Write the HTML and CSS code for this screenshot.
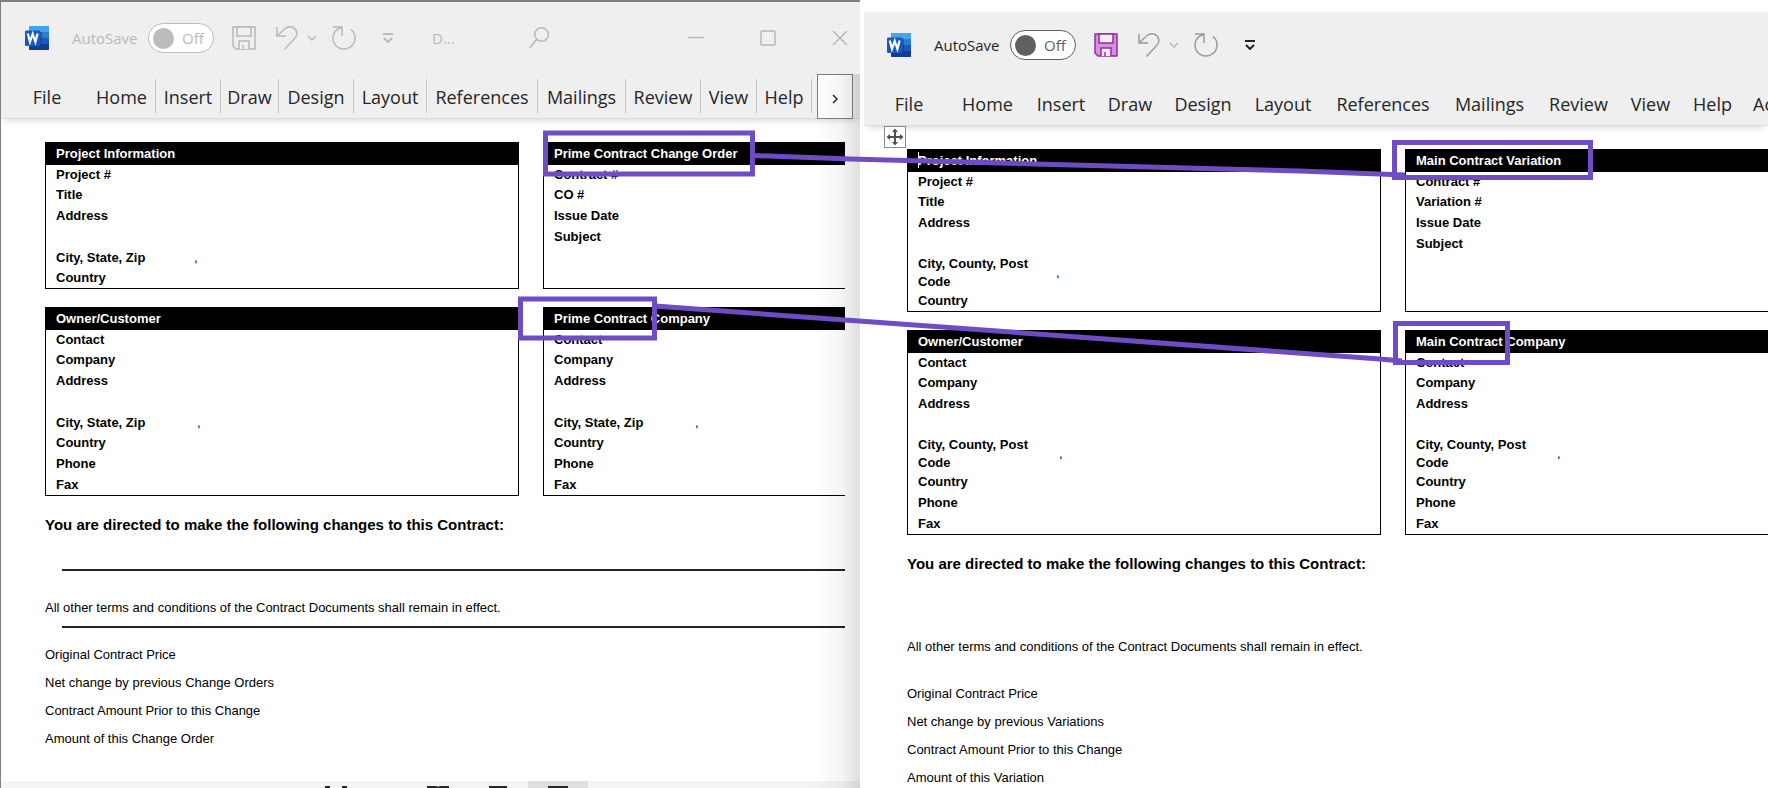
FILE: index.html
```html
<!DOCTYPE html>
<html lang="en">
<head>
    <meta charset="UTF-8">
    <meta name="viewport" content="width=device-width, initial-scale=1.0">
    <title>Contract Change Order / Variation</title>
    <link rel="stylesheet" href="styles.css">
</head>
<body>
    <!-- Shared icons -->
    <svg class="sprite" aria-hidden="true">
        <symbol id="word" viewBox="0 0 24 24">
            <rect x="4" y="0" width="20" height="24" rx="1" fill="#2b7cd3"/>
            <path d="M5 0h18a1 1 0 0 1 1 1v5H4V1a1 1 0 0 1 1-1z" fill="#41a5ee"/>
            <rect x="4" y="12" width="20" height="6" fill="#185abd"/>
            <path d="M4 18h20v5a1 1 0 0 1-1 1H5a1 1 0 0 1-1-1z" fill="#103f91"/>
            <path d="M4 6h12a1 1 0 0 1 1 1v12a1 1 0 0 1-1 1H4z" fill="#0b2f6e" opacity=".45"/>
            <rect x="0" y="4.500" width="15.500" height="15.500" rx="1.200" fill="#185abd"/>
            <path d="M2.800 7.500l2.200 8.500 2.700-8 2.700 8 2.200-8.500" fill="none" stroke="#fff" stroke-width="2.200"/>
        </symbol>
        <symbol id="save" viewBox="0 0 24 24">
            <path class="disk" d="M1 1h22v22H4l-3-3z"/>
            <path class="slot" fill="#efefef" d="M5 1h14v9H5zM7 23v-8h10v8"/>
            <path class="slot" d="M11 19v4"/>
        </symbol>
        <symbol id="undo" viewBox="0 0 22 24">
            <path d="M1 1v9h9M1.500 9.500l7-6.500C12 0 17 0 19.500 3.500c2 3 1.500 6-.5 8.500L8.500 23.500"/>
        </symbol>
        <symbol id="chevron" viewBox="0 0 10 6">
            <path d="M1 1l4 4 4-4"/>
        </symbol>
        <symbol id="redo" viewBox="0 0 24 24">
            <path d="M1 1h9v9M9.500 1.500C4.500 3 1 7 1 12.200a11 11 0 1 0 18-8.700"/>
        </symbol>
        <symbol id="customize" viewBox="0 0 12 10">
            <path d="M1 1h10M2 5l4 4 4-4"/>
        </symbol>
    </svg>

    <div class="desktop">
        <!-- US template -->
        <section class="window inactive">
            <header class="title-bar">
                <svg class="logo"><use href="#word"/></svg>
                <label class="autosave">
                    <span class="autosave-name">AutoSave</span>
                    <span class="pill"><input type="checkbox">Off</span>
                </label>
                <button class="tool save" aria-label="Save"><svg><use href="#save"/></svg></button>
                <button class="tool undo" aria-label="Undo"><svg><use href="#undo"/></svg></button>
                <button class="tool chevron" aria-label="Undo list"><svg><use href="#chevron"/></svg></button>
                <button class="tool redo" aria-label="Redo"><svg><use href="#redo"/></svg></button>
                <button class="tool customize" aria-label="Customize toolbar"><svg><use href="#customize"/></svg></button>
                <span class="doc-name">D...</span>
                <button class="tool search" aria-label="Search"><svg viewBox="0 0 20 22"><circle cx="12.500" cy="7.500" r="6.800"/><path d="M7.500 12.500L.7 21"/></svg></button>
                <div class="window-buttons">
                    <button class="tool" aria-label="Minimize"><svg viewBox="0 0 16 16"><path d="M0 7.500h16"/></svg></button>
                    <button class="tool" aria-label="Maximize"><svg viewBox="0 0 16 16"><rect x="1" y="1" width="14" height="14" rx="1"/></svg></button>
                    <button class="tool" aria-label="Close"><svg viewBox="0 0 16 16"><path d="M1 1l14 14M15 1L1 15"/></svg></button>
                </div>
            </header>
            <nav class="tabs">
                <button>File</button>
                <button>Home</button>
                <button>Insert</button>
                <button>Draw</button>
                <button>Design</button>
                <button>Layout</button>
                <button>References</button>
                <button>Mailings</button>
                <button>Review</button>
                <button>View</button>
                <button>Help</button>
                <button class="more" aria-label="More tabs"><svg viewBox="0 0 6 10"><path d="M1 1l4 4-4 4"/></svg></button>
            </nav>

            <main class="page">
                <div class="cards">
                    <table class="card">
                        <colgroup><col class="label-col"><col></colgroup>
                        <thead><tr><th colspan="2">Project Information</th></tr></thead>
                        <tbody>
                            <tr><th>Project #</th><td></td></tr>
                            <tr><th>Title</th><td></td></tr>
                            <tr><th>Address</th><td></td></tr>
                            <tr><th></th><td></td></tr>
                            <tr><th>City, State, Zip</th><td>,</td></tr>
                            <tr><th>Country</th><td></td></tr>
                        </tbody>
                    </table>
                    <table class="card cut">
                        <colgroup><col class="label-col"><col></colgroup>
                        <thead><tr><th colspan="2">Prime Contract Change Order</th></tr></thead>
                        <tbody>
                            <tr><th>Contract #</th><td></td></tr>
                            <tr><th>CO #</th><td></td></tr>
                            <tr><th>Issue Date</th><td></td></tr>
                            <tr><th>Subject</th><td></td></tr>
                            <tr><th></th><td></td></tr>
                            <tr><th></th><td></td></tr>
                        </tbody>
                    </table>
                    <table class="card company">
                        <colgroup><col class="label-col"><col></colgroup>
                        <thead><tr><th colspan="2">Owner/Customer</th></tr></thead>
                        <tbody>
                            <tr><th>Contact</th><td></td></tr>
                            <tr><th>Company</th><td></td></tr>
                            <tr><th>Address</th><td></td></tr>
                            <tr><th></th><td></td></tr>
                            <tr><th>City, State, Zip</th><td>,</td></tr>
                            <tr><th>Country</th><td></td></tr>
                            <tr><th>Phone</th><td></td></tr>
                            <tr><th>Fax</th><td></td></tr>
                        </tbody>
                    </table>
                    <table class="card company cut">
                        <colgroup><col class="label-col"><col></colgroup>
                        <thead><tr><th colspan="2">Prime Contract Company</th></tr></thead>
                        <tbody>
                            <tr><th>Contact</th><td></td></tr>
                            <tr><th>Company</th><td></td></tr>
                            <tr><th>Address</th><td></td></tr>
                            <tr><th></th><td></td></tr>
                            <tr><th>City, State, Zip</th><td>,</td></tr>
                            <tr><th>Country</th><td></td></tr>
                            <tr><th>Phone</th><td></td></tr>
                            <tr><th>Fax</th><td></td></tr>
                        </tbody>
                    </table>
                </div>
                <h2>You are directed to make the following changes to this Contract:</h2>
                <hr>
                <p class="terms">All other terms and conditions of the Contract Documents shall remain in effect.</p>
                <hr>
                <ul class="amounts">
                    <li>Original Contract Price</li>
                    <li>Net change by previous Change Orders</li>
                    <li>Contract Amount Prior to this Change</li>
                    <li>Amount of this Change Order</li>
                </ul>
            </main>

            <footer class="status-bar">
                <button aria-label="Focus"><svg viewBox="0 0 22 20"><path d="M0 1h5M17 1h5M1 1v5M21 1v5"/></svg></button>
                <button aria-label="Read mode"><svg viewBox="0 0 22 20"><path d="M1 1h8l2 1 2-1h8v16H1zM11 2v15"/></svg></button>
                <button aria-label="Print layout"><svg viewBox="0 0 22 20"><path d="M3 1h16v18H3z"/></svg></button>
                <button class="active" aria-label="Web layout"><svg viewBox="0 0 22 20"><path d="M2 1h18v18H2z"/></svg></button>
            </footer>
        </section>

        <!-- UK template -->
        <section class="window variation">
            <header class="title-bar">
                <svg class="logo"><use href="#word"/></svg>
                <label class="autosave">
                    <span class="autosave-name">AutoSave</span>
                    <span class="pill"><input type="checkbox">Off</span>
                </label>
                <button class="tool save" aria-label="Save"><svg><use href="#save"/></svg></button>
                <button class="tool undo" aria-label="Undo"><svg><use href="#undo"/></svg></button>
                <button class="tool chevron" aria-label="Undo list"><svg><use href="#chevron"/></svg></button>
                <button class="tool redo" aria-label="Redo"><svg><use href="#redo"/></svg></button>
                <button class="tool customize" aria-label="Customize toolbar"><svg><use href="#customize"/></svg></button>
            </header>
            <nav class="tabs">
                <button>File</button>
                <button>Home</button>
                <button>Insert</button>
                <button>Draw</button>
                <button>Design</button>
                <button>Layout</button>
                <button>References</button>
                <button>Mailings</button>
                <button>Review</button>
                <button>View</button>
                <button>Help</button>
                <button class="last">Acrobat</button>
            </nav>

            <main class="page">
                <svg class="move-handle" viewBox="0 0 22 22">
                    <rect x=".5" y=".5" width="21" height="21"/>
                    <path d="M11 4v14M4 11h14"/>
                    <path class="tip" d="M11 2.500l3 3.500H8zM11 19.500l3-3.500H8zM2.500 11L6 8v6zM19.500 11L16 8v6z"/>
                </svg>
                <div class="cards">
                    <table class="card">
                        <colgroup><col class="label-col"><col></colgroup>
                        <thead><tr><th colspan="2"><span class="caret"></span>Project Information</th></tr></thead>
                        <tbody>
                            <tr><th>Project #</th><td></td></tr>
                            <tr><th>Title</th><td></td></tr>
                            <tr><th>Address</th><td></td></tr>
                            <tr><th></th><td></td></tr>
                            <tr class="tall"><th>City, County, Post Code</th><td>,</td></tr>
                            <tr><th>Country</th><td></td></tr>
                        </tbody>
                    </table>
                    <table class="card cut">
                        <colgroup><col class="label-col"><col></colgroup>
                        <thead><tr><th colspan="2">Main Contract Variation</th></tr></thead>
                        <tbody>
                            <tr><th>Contract #</th><td></td></tr>
                            <tr><th>Variation #</th><td></td></tr>
                            <tr><th>Issue Date</th><td></td></tr>
                            <tr><th>Subject</th><td></td></tr>
                            <tr class="tall"><th></th><td></td></tr>
                            <tr><th></th><td></td></tr>
                        </tbody>
                    </table>
                    <table class="card company">
                        <colgroup><col class="label-col"><col></colgroup>
                        <thead><tr><th colspan="2">Owner/Customer</th></tr></thead>
                        <tbody>
                            <tr><th>Contact</th><td></td></tr>
                            <tr><th>Company</th><td></td></tr>
                            <tr><th>Address</th><td></td></tr>
                            <tr><th></th><td></td></tr>
                            <tr class="tall"><th>City, County, Post Code</th><td>,</td></tr>
                            <tr><th>Country</th><td></td></tr>
                            <tr><th>Phone</th><td></td></tr>
                            <tr><th>Fax</th><td></td></tr>
                        </tbody>
                    </table>
                    <table class="card company cut">
                        <colgroup><col class="label-col"><col></colgroup>
                        <thead><tr><th colspan="2">Main Contract Company</th></tr></thead>
                        <tbody>
                            <tr><th>Contact</th><td></td></tr>
                            <tr><th>Company</th><td></td></tr>
                            <tr><th>Address</th><td></td></tr>
                            <tr><th></th><td></td></tr>
                            <tr class="tall"><th>City, County, Post Code</th><td>,</td></tr>
                            <tr><th>Country</th><td></td></tr>
                            <tr><th>Phone</th><td></td></tr>
                            <tr><th>Fax</th><td></td></tr>
                        </tbody>
                    </table>
                </div>
                <h2>You are directed to make the following changes to this Contract:</h2>
                <hr>
                <p class="terms">All other terms and conditions of the Contract Documents shall remain in effect.</p>
                <hr>
                <ul class="amounts">
                    <li>Original Contract Price</li>
                    <li>Net change by previous Variations</li>
                    <li>Contract Amount Prior to this Change</li>
                    <li>Amount of this Variation</li>
                </ul>
            </main>
        </section>

        <!-- Purple markup linking the renamed headings -->
        <svg class="markup" width="1768" height="788">
            <rect x="545.500" y="133" width="207" height="41"/>
            <rect x="520.500" y="299" width="134" height="39"/>
            <rect x="1394.500" y="142.500" width="196" height="35"/>
            <rect x="1395.500" y="323.500" width="112" height="39"/>
            <path d="M753 155.500L850 159l450 12 105 4"/>
            <path d="M655 306l190 14 535 39 22 2"/>
        </svg>
    </div>
</body>
</html>
```

FILE: styles.css
```css
* {
    box-sizing: border-box;
}

body {
    margin: 0;
    background: #fff;
    font-family: "Liberation Sans", Arial, sans-serif;
    color: #000;
}

button {
    padding: 0;
    border: none;
    background: none;
    font: inherit;
    color: inherit;
}

.sprite {
    display: none;
}

.desktop {
    position: relative;
    display: flex;
    gap: 4px;
    height: 100vh;
    overflow: hidden;
}

/* Windows */
.window {
    position: relative;
    flex: 859 1 0;
    min-width: 0;
    overflow: hidden;
    border-top: 2px solid #808080;
    border-left: 1px solid #808080;
}

.variation {
    flex-grow: 904;
    margin-top: 12px;
    border: none;
}

/* Fade along the right edge of the back window */
.inactive::after {
    content: "";
    position: absolute;
    top: 72px;
    right: 0;
    bottom: 0;
    width: 48px;
    background: linear-gradient(to right, rgba(0, 0, 0, 0), rgba(0, 0, 0, 0.04) 60%, rgba(0, 0, 0, 0.13));
    pointer-events: none;
}

/* Title bar */
.title-bar {
    display: flex;
    align-items: center;
    height: 72px;
    padding: 0 12px 0 24px;
    background: #efefef;
    font-family: "Open Sans", "Noto Sans", sans-serif;
    font-size: 15px;
    color: #262626;
}

.variation .title-bar {
    height: 69px;
    padding: 0 0 3px 23px;
}

.inactive .title-bar {
    color: #b9b9b9;
}

.logo {
    width: 24px;
    height: 24px;
    margin-right: 23px;
}

.autosave {
    display: flex;
    align-items: center;
}

.autosave-name {
    width: 76px;
}

.pill {
    display: flex;
    align-items: center;
    gap: 8px;
    width: 66px;
    height: 30px;
    padding-left: 4px;
    border: 1px solid #606060;
    border-radius: 15px;
    background: #fff;
    color: #606060;
}

.pill input {
    appearance: none;
    width: 21px;
    height: 21px;
    margin: 0;
    border-radius: 50%;
    background: #606060;
}

.inactive .pill {
    border-color: #bcbcbc;
    color: #b9b9b9;
}

.inactive .pill input {
    background: #bcbcbc;
}

.tool svg {
    display: block;
    width: 16px;
    height: 16px;
    fill: none;
    stroke: #b9b9b9;
    stroke-width: 1.5;
}

.save {
    margin-left: 18px;
}

.save svg,
.redo svg {
    width: 24px;
    height: 24px;
}

.variation .save svg {
    fill: #d592dc;
    stroke: #962ba0;
}

.variation .undo svg,
.variation .redo svg {
    stroke: #9b9b9b;
}

.undo {
    margin-left: 20px;
}

.undo svg {
    width: 22px;
    height: 24px;
}

.chevron {
    margin-left: 9px;
}

.chevron svg {
    width: 10px;
    height: 6px;
}

.redo {
    margin-left: 15px;
}

.customize {
    margin-left: 26px;
}

.customize svg {
    width: 12px;
    height: 10px;
    stroke-width: 2;
}

.variation .customize svg {
    stroke: #262626;
}

.doc-name {
    width: 97px;
    margin-left: 38px;
}

.search svg {
    width: 20px;
    height: 22px;
}

.window-buttons {
    display: flex;
    gap: 56px;
    margin-left: auto;
}

/* Ribbon tabs */
.tabs {
    position: relative;
    display: grid;
    grid-template-columns: 82px 68px 65px 58px 75px 73px 111px 88px 75px 56px 55px 36px;
    height: 45px;
    padding-left: 5px;
    background: #efefef;
    border-bottom: 1px solid #dcdcdc;
    box-shadow: 0 6px 6px -4px rgba(0, 0, 0, 0.14);
    font-family: "Open Sans", "Noto Sans", sans-serif;
    font-size: 18px;
    line-height: 24px;
    color: #262626;
    white-space: nowrap;
}

.tabs button {
    height: 34px;
    margin-top: 5px;
    padding-top: 2px;
}

.inactive .tabs button {
    border-right: 1px solid #c8c8c8;
}

.inactive .tabs button:first-child {
    border: none;
}

.inactive .tabs .more {
    width: 36px;
    height: 45px;
    margin: 0 0 0 5px;
    padding: 0;
    border: 1px solid #808080;
    background: #fff;
}

.more svg {
    width: 6px;
    height: 10px;
    fill: none;
    stroke: #262626;
    stroke-width: 1.5;
}

.variation .tabs {
    grid-template-columns: 82px 75px 72px 66px 80px 80px 120px 93px 85px 59px 65px 80px;
    padding-left: 4px;
}

.tabs .last {
    padding-left: 8px;
    text-align: left;
}

/* Document page */
.page {
    position: relative;
    margin: 23px 15px 0 44px;
}

.variation .page {
    margin: 23px 0 0 43px;
}

.cards {
    display: grid;
    grid-template-columns: 474fr 302fr;
    gap: 18px 24px;
}

.variation .cards {
    grid-template-columns: 474fr 363fr;
}

.card {
    width: 100%;
    border: 1px solid #000;
    border-top: none;
    border-spacing: 0;
    table-layout: fixed;
    font-size: 13px;
    line-height: 18px;
}

.card.cut {
    border-right: none;
}

.label-col {
    width: 140px;
}

.card th,
.card td {
    height: 21px;
    padding: 0;
    text-align: left;
    vertical-align: middle;
}

.card th {
    padding-left: 10px;
}

.card thead th {
    height: 23px;
    background: #000;
    color: #fff;
}

.card tbody tr:nth-child(1) th,
.card tbody tr:nth-child(2) th,
.card tbody tr:nth-child(6) th {
    height: 20px;
}

.card tbody tr:nth-child(1) td,
.card tbody tr:nth-child(2) td,
.card tbody tr:nth-child(6) td {
    height: 20px;
}

.card .tall th,
.card .tall td {
    height: 37px;
}

.card td {
    padding-left: 8px;
}

.card.company td {
    padding-left: 11px;
}

h2 {
    margin: 19px 0 0;
    font-size: 15px;
    line-height: 20px;
}

hr {
    height: 2px;
    margin: 34px 0 0 17px;
    border: none;
    background: #222;
}

.terms + hr {
    margin-top: 8px;
}

.variation hr {
    visibility: hidden;
}

.terms {
    margin: 27px 0 0;
    font-size: 13px;
    line-height: 20px;
}

.amounts {
    display: flex;
    flex-direction: column;
    gap: 8px;
    margin: 17px 0 0;
    padding: 0;
    list-style: none;
    font-size: 13px;
    line-height: 20px;
}

.caret {
    position: absolute;
    width: 1px;
    height: 16px;
    background: #fff;
}

.move-handle {
    position: absolute;
    top: -23px;
    left: -23px;
    width: 22px;
    height: 22px;
    fill: #fff;
    stroke: #8a8a8a;
}

.move-handle path {
    stroke: #505050;
    stroke-width: 2;
}

.move-handle .tip {
    fill: #505050;
    stroke: none;
}

/* Status bar */
.status-bar {
    position: absolute;
    left: 0;
    right: 0;
    bottom: -23px;
    display: flex;
    height: 30px;
    padding-left: 305px;
    background: #f4f4f4;
}

.status-bar button {
    display: flex;
    justify-content: center;
    width: 60px;
    padding-top: 5px;
}

.status-bar button:first-child {
    margin-right: 42px;
}

.status-bar .active {
    background: #dfdfdf;
}

.status-bar svg {
    width: 22px;
    height: 20px;
    fill: none;
    stroke: #262626;
    stroke-width: 2;
}

/* Markup */
.markup {
    position: absolute;
    top: 0;
    left: 0;
    fill: none;
    stroke: #6f4bc4;
    stroke-width: 5;
    pointer-events: none;
}
```
